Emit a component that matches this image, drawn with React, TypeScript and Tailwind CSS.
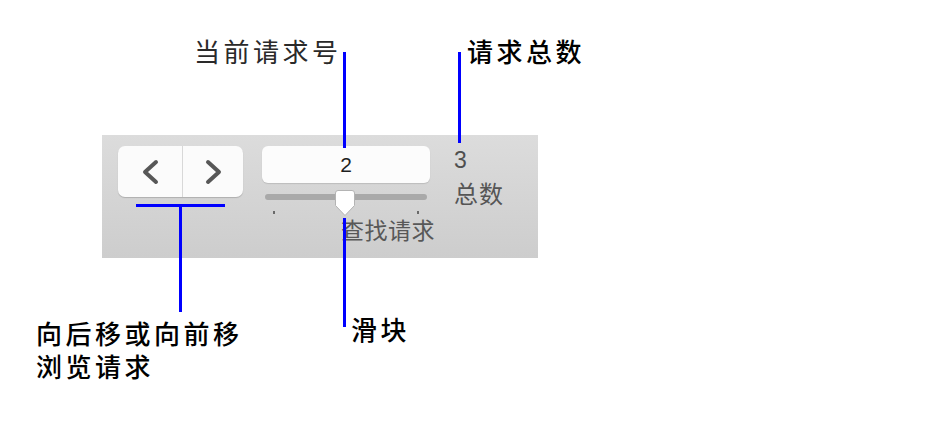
import React from 'react';

const cjk = '"Noto Sans CJK SC", "Noto Sans", sans-serif';
const latin = '"Liberation Sans", "Noto Sans CJK SC", sans-serif';

type LineProps = { className: string };

// Blue leader line used by the callouts
const Leader: React.FC<LineProps> = ({ className }) => (
    <div className={`absolute bg-[#0000ff] ${className}`} />
);

const Chevron: React.FC<{ dir: 'left' | 'right' }> = ({ dir }) => (
    <svg width="19" height="26" viewBox="0 0 19 26">
        <polyline
            points={dir === 'left' ? '15,3 4,13 15,23' : '4,3 15,13 4,23'}
            fill="none"
            stroke="#575757"
            strokeWidth="4"
            strokeLinecap="round"
            strokeLinejoin="round"
        />
    </svg>
);

const Thumb: React.FC = () => (
    <svg width="22" height="28" viewBox="0 0 22 28">
        <path
            d="M1.5 4 Q1.5 1.5 4 1.5 H18 Q20.5 1.5 20.5 4 V16.5 L11 26.5 L1.5 16.5 Z"
            fill="#ffffff"
            stroke="#b4b4b4"
            strokeWidth="1"
        />
    </svg>
);

const Toolbar: React.FC = () => (
    <div
        className="ml-[102px] w-[436px] h-[123px] bg-linear-to-b from-[#dcdcdc] to-[#cdcdcd] flex items-start pl-[16px] pt-[11px]"
    >
        {/* back / forward buttons */}
        <div className="w-[125px] h-[51px] flex rounded-[7px] bg-[#fbfbfb] shadow-[0_1px_1px_rgba(0,0,0,0.18)]">
            <div className="w-[64px] h-full flex items-center justify-center">
                <Chevron dir="left" />
            </div>
            <div className="flex-1 h-full flex items-center justify-center border-l border-[#d8d8d8]">
                <Chevron dir="right" />
            </div>
        </div>

        {/* request number field + slider */}
        <div className="ml-[19px] w-[168px] flex flex-col">
            <div
                className="h-[37px] rounded-[6px] bg-[#fcfcfc] shadow-[0_1px_1px_rgba(0,0,0,0.12)] flex items-center justify-center text-[21px] text-[#1e1e1e]"
                style={{ fontFamily: latin }}
            >
                2
            </div>
            <div className="relative mt-[11px] mx-[3px] h-[6px] rounded-full bg-[#a9a9a9]">
                <div className="absolute left-[69px] top-[-5px]">
                    <Thumb />
                </div>
            </div>
            <div className="flex justify-between px-[11px] mt-[11px] h-[3px]">
                <div className="w-[2px] h-[3px] bg-[#6a6a6a]" />
                <div className="w-[2px] h-[3px] bg-[#6a6a6a]" />
            </div>
            <div
                className="pl-[79px] mt-[4px] whitespace-nowrap text-[23px] leading-none tracking-[0.5px] text-[#585858]"
                style={{ fontFamily: cjk }}
            >
                查找请求
            </div>
        </div>

        {/* total count */}
        <div className="ml-[24px] flex flex-col">
            <div className="mt-[3px] text-[23px] leading-none text-[#4f4f4f]" style={{ fontFamily: latin }}>
                3
            </div>
            <div
                className="mt-[9px] text-[24px] leading-none tracking-[1px] text-[#555] whitespace-nowrap"
                style={{ fontFamily: cjk }}
            >
                总数
            </div>
        </div>
    </div>
);

const App: React.FC = () => {
    const label = 'absolute text-[26px] leading-[30px] tracking-[3.5px] whitespace-nowrap';
    return (
        <div className="relative w-[927px] h-[446px] bg-white overflow-hidden pt-[135px]" style={{ fontFamily: cjk }}>
            <Toolbar />

            {/* callouts */}
            <Leader className="left-[343px] top-[52px] w-[3px] h-[96px]" />
            <Leader className="left-[458px] top-[52px] w-[3px] h-[91px]" />
            <Leader className="left-[136px] top-[204px] w-[89px] h-[3px]" />
            <Leader className="left-[179px] top-[204px] w-[3px] h-[108px]" />
            <Leader className="left-[343px] top-[218px] w-[3px] h-[109px]" />

            <div className={`${label} left-[194px] top-[36px] text-[#2a2a2a]`}>当前请求号</div>
            <div className={`${label} left-[467px] top-[36px] text-black font-medium`}>请求总数</div>
            <div className={`${label} left-[36px] top-[318px] text-black font-medium`}>向后移或向前移</div>
            <div className={`${label} left-[36px] top-[351px] text-black font-medium`}>浏览请求</div>
            <div className={`${label} left-[351px] top-[314px] text-black font-medium`}>滑块</div>
        </div>
    );
};

export default App;
